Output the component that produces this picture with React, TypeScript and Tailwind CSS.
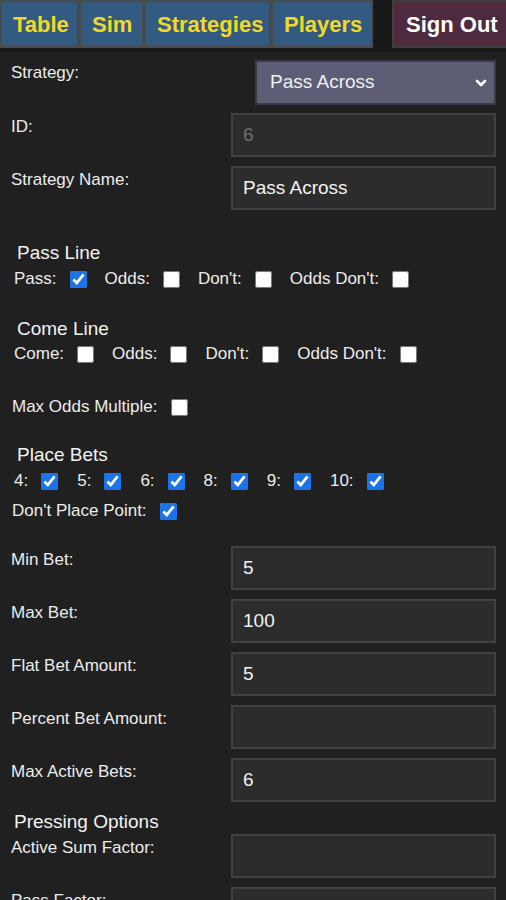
import React from "react";

const font = { fontFamily: '"Liberation Sans", Arial, sans-serif' };

function CbItem({ label, checked, mr }: { label: string; checked?: boolean; mr: string }) {
  return (
    <span className={"flex items-center " + mr}>
      <span className="leading-[20px]">{label}</span>
      <input
        type="checkbox"
        defaultChecked={checked}
        className="block w-[17px] h-[17px] m-0 ml-[13px] accent-[#1a73e8] shrink-0"
      />
    </span>
  );
}

function InputRow({ label, value, muted }: { label: string; value: string; muted?: boolean }) {
  return (
    <div className="flex justify-between items-start h-[44px] mb-[9px]">
      <div className="pt-[4px] text-[17px] leading-[20px] text-[#ececec]">{label}</div>
      <div
        className={
          "w-[265px] h-[44px] bg-[#2c2c2c] border-2 border-[#414141] flex items-center pl-[10px] text-[19px] " +
          (muted ? "text-[#6e6e6e]" : "text-[#f2f2f2]")
        }
      >
        {value}
      </div>
    </div>
  );
}

const tab =
  "h-[48px] px-[11px] flex items-center bg-[#335a80] border-2 border-[#4a4a4a] text-[#f2d82a] font-bold text-[22px] whitespace-nowrap";

export default function App() {
  return (
    <div className="min-h-[900px] bg-[#202020] text-[#ececec]" style={font}>
      <div className="flex bg-[#181818] h-[52px] pb-[4px]">
        <div className={tab + " w-[79px]"}>Table</div>
        <div className={tab + " w-[65px]"}>Sim</div>
        <div className={tab + " w-[127px]"}>Strategies</div>
        <div className={tab + " w-[102px]"}>Players</div>
        <div className="w-[19px]" />
        <div className="h-[48px] pl-[12px] flex items-center bg-[#4e2a3e] border-2 border-[#3e3e3e] border-r-0 text-white font-bold text-[22px] flex-1 whitespace-nowrap">
          Sign Out
        </div>
      </div>

      <div className="pl-[11px] pr-[10px] pt-[8px]">
        <div className="flex justify-between items-start h-[45px] mb-[8px]">
          <div className="pt-[3px] text-[17px] leading-[20px]">Strategy:</div>
          <div className="w-[241px] h-[45px] bg-[#5e5d76] border-2 border-[#3a3a44] flex items-center justify-between pl-[13px] pr-[6px] text-[19px] text-[#f0f0f0]">
            <span>Pass Across</span>
            <svg width="14" height="14" viewBox="0 0 14 14">
              <path d="M3 5 L7 9 L11 5" stroke="#fff" strokeWidth="2.6" fill="none" strokeLinecap="round" strokeLinejoin="round" />
            </svg>
          </div>
        </div>
        <InputRow label="ID:" value="6" muted />
        <InputRow label="Strategy Name:" value="Pass Across" />

        <div className="pl-[6px] pt-[23px] text-[19px] leading-[22px] text-[#f2f2f2]">Pass Line</div>
        <div className="flex items-center pl-[3px] text-[17px] h-[26px] mt-[2px]">
          <CbItem label="Pass:" checked mr="mr-[18px]" />
          <CbItem label="Odds:" mr="mr-[18px]" />
          <CbItem label="Don't:" mr="mr-[18px]" />
          <CbItem label="Odds Don't:" mr="mr-[18px]" />
        </div>

        <div className="pl-[6px] pt-[26px] text-[19px] leading-[22px] text-[#f2f2f2]">Come Line</div>
        <div className="flex items-center pl-[3px] text-[17px] h-[26px] mt-[1px]">
          <CbItem label="Come:" mr="mr-[18px]" />
          <CbItem label="Odds:" mr="mr-[18px]" />
          <CbItem label="Don't:" mr="mr-[18px]" />
          <CbItem label="Odds Don't:" mr="mr-[18px]" />
        </div>

        <div className="flex items-center pl-[1px] text-[17px] h-[26px] mt-[27px]">
          <CbItem label="Max Odds Multiple:" mr="mr-[18px]" />
        </div>

        <div className="pl-[6px] pt-[24px] text-[19px] leading-[22px] text-[#f2f2f2]">Place Bets</div>
        <div className="flex items-center pl-[3px] text-[17px] h-[26px] mt-[2px]">
          <CbItem label="4:" checked mr="mr-[19px]" />
          <CbItem label="5:" checked mr="mr-[19px]" />
          <CbItem label="6:" checked mr="mr-[19px]" />
          <CbItem label="8:" checked mr="mr-[19px]" />
          <CbItem label="9:" checked mr="mr-[19px]" />
          <CbItem label="10:" checked mr="mr-[19px]" />
        </div>
        <div className="flex items-center pl-[1px] text-[17px] h-[26px] mt-[4px]">
          <CbItem label="Don't Place Point:" checked mr="mr-[18px]" />
        </div>

        <div className="h-[22px]" />
        <InputRow label="Min Bet:" value="5" />
        <InputRow label="Max Bet:" value="100" />
        <InputRow label="Flat Bet Amount:" value="5" />
        <InputRow label="Percent Bet Amount:" value="" />
        <InputRow label="Max Active Bets:" value="6" />

        <div className="pl-[3px] text-[19px] leading-[22px] text-[#f2f2f2] mb-[1px]">Pressing Options</div>
        <InputRow label="Active Sum Factor:" value="" />
        <InputRow label="Pass Factor:" value="" />
      </div>
    </div>
  );
}
